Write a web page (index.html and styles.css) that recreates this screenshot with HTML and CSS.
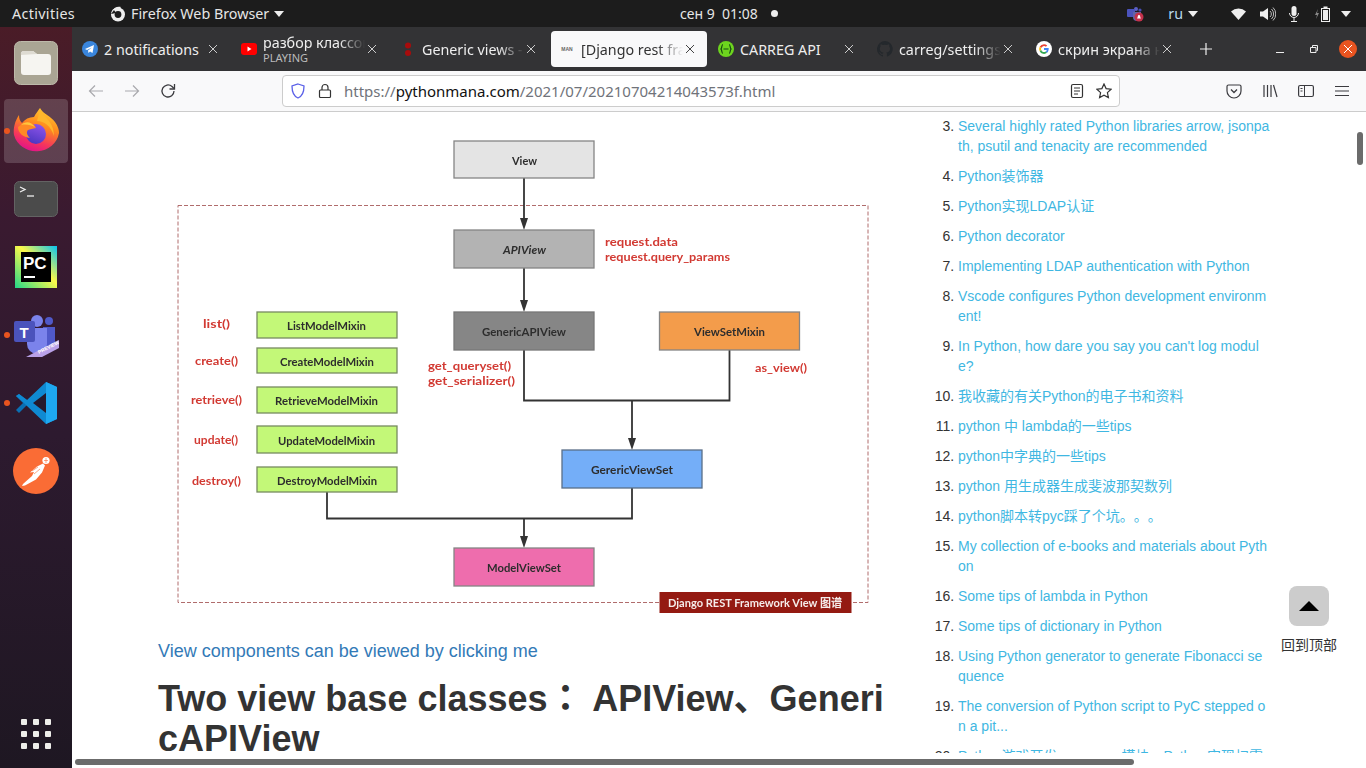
FILE: index.html
```html
<!doctype html>
<html lang="ru">
  <head>
    <meta charset="utf-8" />
    <title>[Django rest framework] Generic views</title>
    <link rel="stylesheet" href="styles.css">
  </head>
  <body>
    <svg class="sprite" aria-hidden="true">
      <symbol id="i-close" viewBox="0 0 10 10"><path d="M1 1l8 8M9 1l-8 8" fill="none" stroke="currentColor" stroke-width="1"/></symbol>
      <symbol id="i-caret" viewBox="0 0 10 6"><path d="M0 0h10L5 6z" fill="currentColor"/></symbol>
    </svg>

    <header class="topbar">
      <span class="activities">Activities</span>
      <span class="appmenu">
        <svg width="16" height="16" viewBox="0 0 16 16"><circle cx="8" cy="8.500" r="7" fill="#eee"/><circle cx="8" cy="8.500" r="3.400" fill="#1d1d1d"/><path d="M2 5C4 1 8 0 11 1L8 5z" fill="#eee"/><path d="M1 8l3-4 2 3z" fill="#1d1d1d"/></svg>
        <span>Firefox Web Browser</span>
        <svg class="caret" width="10" height="6"><use href="#i-caret"/></svg>
      </span>
      <span class="clock">сен 9&nbsp;&nbsp;01:08</span>
      <span class="clock-dot"></span>
      <span class="tray">
        <svg class="tray-teams" width="17" height="16" viewBox="0 0 17 16"><circle cx="9" cy="3" r="2" fill="#5b5fc7"/><circle cx="13" cy="4" r="1.600" fill="#464eb8"/><rect x="0" y="3" width="8" height="8" rx="1" fill="#4b53bc"/><path d="M6 6h8v5a4 4 0 0 1-8 0z" fill="#6264a7"/><circle cx="12" cy="11" r="4.500" fill="#c4314b"/><path d="M10 12.500c1-1 .5-3.500 2-3.500s1 2.500 2 3.500z" fill="#fff"/></svg>
        <span class="lang">ru</span>
        <svg class="caret" width="10" height="6"><use href="#i-caret"/></svg>
        <svg class="tray-wifi" width="15" height="12" viewBox="0 0 15 12"><path d="M0 3.500a11 11 0 0 1 15 0L7.500 12z" fill="#eee"/></svg>
        <svg class="tray-vol" width="16" height="14" viewBox="0 0 16 14"><path d="M0 4.500h3L8 1v12L3 9.500H0z" fill="#eee"/><path d="M10 4a4 4 0 0 1 0 6M11.500 2a7 7 0 0 1 0 10M13 .5a9 9 0 0 1 0 13" fill="none" stroke="#bbb"/></svg>
        <svg class="tray-mic" width="12" height="16" viewBox="0 0 12 16"><rect x="3.500" y="0" width="5" height="10" rx="2.500" fill="#eee"/><path d="M1.500 7a4.500 4.500 0 0 0 9 0M6 11.500V15M3 15.500h6" fill="none" stroke="#eee"/></svg>
        <svg class="tray-bat" width="16" height="16" viewBox="0 0 16 16"><path d="M3 3L0 9h2l-1 4 3-6H2z" fill="#888"/><rect x="6.500" y="2.500" width="8" height="13" fill="none" stroke="#eee"/><rect x="8.500" y="0.500" width="4" height="2" fill="#eee"/><rect x="8" y="4" width="5" height="10" fill="#eee"/></svg>
        <svg class="caret" width="10" height="6"><use href="#i-caret"/></svg>
      </span>
    </header>

    <div class="desktop">
      <nav class="dock">
        <div class="dock-item">
          <svg width="44" height="44" viewBox="0 0 44 44"><rect x=".5" y=".5" width="43" height="43" rx="6" fill="#aaa594" stroke="#bdb9aa"/><path d="M7 13a3 3 0 0 1 3-3h9l4 3h11a3 3 0 0 1 3 3v15a3 3 0 0 1-3 3H10a3 3 0 0 1-3-3z" fill="#f6f5f1"/><path d="M7 14a3 3 0 0 1 3-4h9l4 3z" fill="#dedbd2"/></svg>
        </div>
        <div class="dock-item is-active">
          <span class="run-dot"></span>
          <svg width="46" height="46" viewBox="0 0 46 46">
            <defs>
              <linearGradient id="fx-outer" x1=".75" y1="0" x2=".35" y2="1"><stop offset="0" stop-color="#ffd030"/><stop offset=".4" stop-color="#ff8a1e"/><stop offset=".75" stop-color="#f5365c"/><stop offset="1" stop-color="#e0128a"/></linearGradient>
              <linearGradient id="fx-inner" x1=".7" y1="0" x2=".3" y2="1"><stop offset="0" stop-color="#8f55ea"/><stop offset="1" stop-color="#4a35c0"/></linearGradient>
            </defs>
            <path d="M27 0c3 6 11 8 15 14 3 4 4 8 4 11a23 21.500 0 0 1-45 2C0 20 2 13 6 7c0 4 1 6 3 8 3-4 7-6 12-6 2-4 4-6 6-9z" fill="url(#fx-outer)"/>
            <path d="M27 2c5 8 14 12 14 26-3-10-10-15-17-15z" fill="#ffb62c"/>
            <circle cx="23" cy="26" r="10" fill="url(#fx-inner)"/>
            <path d="M5 19c4-4 9-5 13-4 3 1 4 3 5 5-3 1-6 1-8 2-2 2-1 5 2 8-7-1-12-5-12-11z" fill="#ff8a25"/>
            <path d="M8 17c4-4 10-4 14 2-4-2-9-3-14-2z" fill="#ffc63c"/>
          </svg>
        </div>
        <div class="dock-item">
          <svg width="44" height="36" viewBox="0 0 44 36"><rect x=".5" y=".5" width="43" height="35" rx="5" fill="#4b4b4b" stroke="#636363"/><path d="M6 6l5 2.500L6 11" fill="none" stroke="#eee" stroke-width="1.300"/><path d="M13 15h7" stroke="#eee" stroke-width="1.300"/></svg>
        </div>
        <div class="dock-item">
          <svg width="42" height="42" viewBox="0 0 42 42">
            <defs><linearGradient id="pc-a" x1="0" y1="1" x2="1" y2="0"><stop offset="0" stop-color="#21d789"/><stop offset=".55" stop-color="#fcf84a"/><stop offset="1" stop-color="#07c3f2"/></linearGradient></defs>
            <rect width="42" height="42" fill="url(#pc-a)"/>
            <rect x="6" y="6" width="30" height="30" fill="#000"/>
            <text class="pc-text" x="8" y="23">PC</text>
            <rect x="9" y="30" width="11" height="2" fill="#fff"/>
          </svg>
        </div>
        <div class="dock-item">
          <span class="run-dot"></span>
          <svg width="46" height="44" viewBox="0 0 46 44">
            <circle cx="24" cy="8" r="6" fill="#7b83eb"/><circle cx="36" cy="8" r="4" fill="#5059c9"/>
            <path d="M30 14h12v16a4 4 0 0 1-4 4h-8z" fill="#5059c9"/>
            <path d="M14 15h20v16a10 10 0 0 1-20 0z" fill="#7b83eb"/>
            <rect x="1" y="8" width="21" height="21" rx="2" fill="#4b53bc"/>
            <text class="teams-t" x="6.500" y="24.500">T</text>
            <path d="M13 44l33-17v8l-17 9z" fill="#b9a1e8"/>
            <text class="teams-p" transform="translate(26 41) rotate(-27)">PREVIEW</text>
          </svg>
        </div>
        <div class="dock-item">
          <span class="run-dot"></span>
          <svg width="42" height="42" viewBox="0 0 42 42">
            <path d="M1 14l3-2 8 6L9 22z" fill="#0a6fb3"/><path d="M1 28l8-8 3 3-8 8z" fill="#0a6fb3"/>
            <path d="M31 0L12 18l-8-6-3 2 8 7 3 3 19 18 11-5V5z" fill="#0f8ad2"/>
            <path d="M31 0l11 5v32l-11 5z" fill="#1ea8f0"/>
            <path d="M31 11v20L18 21z" fill="#261a2c"/>
          </svg>
        </div>
        <div class="dock-item">
          <svg width="46" height="46" viewBox="0 0 46 46">
            <circle cx="23" cy="23" r="23" fill="#fa6c35"/>
            <circle cx="33" cy="12.500" r="3.600" fill="#fff"/>
            <path d="M31 12.500h4M33 10v5" stroke="#fa6c35" stroke-width=".6"/>
            <path d="M30 15.500l-6 3-7 6 4-.5-2 4-9 8-1 2 3-.5 11-6 6-7 3-7z" fill="#fff"/>
            <path d="M19 23l6-4M21 26l6-5" stroke="#fa6c35" stroke-width=".6"/>
          </svg>
        </div>
        <div class="dock-grid">
          <i></i><i></i><i></i><i></i><i></i><i></i><i></i><i></i><i></i>
        </div>
      </nav>

      <div class="browser">
        <div class="tabbar">
          <div class="tab">
            <svg class="favicon" viewBox="0 0 16 16"><circle cx="8" cy="8" r="8" fill="#3a86dd"/><path d="M3 8l9-4-1.500 8L8 10.500 6.500 12 6 9.500l4-3-5 2.500z" fill="#fff"/></svg>
            <span class="tab-label">2 notifications</span>
            <svg class="tab-close" width="10" height="10"><use href="#i-close"/></svg>
          </div>
          <div class="tab">
            <svg class="favicon" viewBox="0 0 16 16"><rect y="2" width="16" height="12" rx="3" fill="#f00"/><path d="M6.500 5.500v5l4-2.500z" fill="#fff"/></svg>
            <span class="tab-label tab-label-two"><span class="tab-title">разбор классов и миксинов</span><small>PLAYING</small></span>
            <svg class="tab-close" width="10" height="10"><use href="#i-close"/></svg>
          </div>
          <div class="tab">
            <svg class="favicon" viewBox="0 0 16 16"><circle cx="8" cy="4.500" r="3" fill="#a80c0c"/><circle cx="8" cy="12" r="3" fill="#a80c0c"/></svg>
            <span class="tab-label is-faded">Generic views - Django REST</span>
            <svg class="tab-close" width="10" height="10"><use href="#i-close"/></svg>
          </div>
          <div class="tab is-current">
            <span class="favicon favicon-man">MAN</span>
            <span class="tab-label is-faded">[Django rest framework] Generic</span>
            <svg class="tab-close" width="10" height="10"><use href="#i-close"/></svg>
          </div>
          <div class="tab">
            <svg class="favicon" viewBox="0 0 16 16"><circle cx="8" cy="8" r="8" fill="#6dd51e"/><path d="M5 3.500C3.500 3.500 4 7.500 3 8c1 .5.500 4.500 2 4.500M11 3.500c1.500 0 1 4 2 4.500-1 .5-.5 4.500-2 4.500M5.500 8h5" fill="none" stroke="#174a12" stroke-width="1.200"/></svg>
            <span class="tab-label">CARREG API</span>
            <svg class="tab-close" width="10" height="10"><use href="#i-close"/></svg>
          </div>
          <div class="tab">
            <svg class="favicon" viewBox="0 0 16 16"><path d="M8 0a8 8 0 0 0-2.500 15.600c.4.100.5-.2.500-.4v-1.400c-2.200.5-2.700-1-2.700-1-.4-.9-.9-1.200-.9-1.200-.7-.5.100-.5.100-.5.800.1 1.200.8 1.200.8.700 1.200 1.900.9 2.300.7.100-.5.300-.9.500-1.100-1.800-.2-3.700-.9-3.700-4 0-.9.300-1.600.8-2.100-.1-.2-.4-1 .1-2.100 0 0 .7-.2 2.200.8a7.600 7.600 0 0 1 4 0c1.500-1 2.200-.8 2.200-.8.400 1.100.2 1.900.1 2.100.5.600.8 1.300.8 2.100 0 3.100-1.900 3.700-3.700 3.900.3.300.6.700.6 1.500v2.200c0 .2.100.5.600.4A8 8 0 0 0 8 0z" fill="#24282c"/></svg>
            <span class="tab-label is-faded">carreg/settings.py at master</span>
            <svg class="tab-close" width="10" height="10"><use href="#i-close"/></svg>
          </div>
          <div class="tab">
            <svg class="favicon" viewBox="0 0 16 16"><circle cx="8" cy="8" r="8" fill="#fff"/><path d="M8 3.200a4.800 4.800 0 0 1 3.200 1.200L9.900 5.700A3 3 0 0 0 5.200 7L3.700 5.800A4.800 4.800 0 0 1 8 3.200z" fill="#ea4335"/><path d="M3.700 5.800L5.200 7a3 3 0 0 0 0 2L3.700 10.200a4.800 4.800 0 0 1 0-4.400z" fill="#fbbc05"/><path d="M5.200 9a3 3 0 0 0 4.500 1.600l1.400 1.200a4.800 4.800 0 0 1-7.400-1.600z" fill="#34a853"/><path d="M12.700 7H8v1.900h2.700a2.400 2.400 0 0 1-1 1.700l1.400 1.200c1.100-1 1.700-2.600 1.600-4.800z" fill="#4285f4"/></svg>
            <span class="tab-label is-faded">скрин экрана на ubuntu</span>
            <svg class="tab-close" width="10" height="10"><use href="#i-close"/></svg>
          </div>
          <div class="newtab">
            <svg width="14" height="14" viewBox="0 0 14 14"><path d="M7 1v12M1 7h12" stroke="#eee" stroke-width="1.200"/></svg>
          </div>
          <div class="winbtns">
            <span class="winbtn"><svg width="10" height="10" viewBox="0 0 10 10"><path d="M1 8.500h8" stroke="#eee" stroke-width="1"/></svg></span>
            <span class="winbtn"><svg width="10" height="10" viewBox="0 0 10 10"><path d="M1.500 3.500h5.500v5H1.500zM3.500 3V1.500h5V6.500H7.500" fill="none" stroke="#eee"/></svg></span>
            <span class="winbtn"><span class="winclose"><svg width="10" height="10"><use href="#i-close"/></svg></span></span>
          </div>
        </div>

        <div class="toolbar">
          <span class="tbtn is-off"><svg width="16" height="16" viewBox="0 0 16 16"><path d="M15 8H1.500M7 2.500L1.500 8 7 13.500" fill="none" stroke="currentColor" stroke-width="1.200"/></svg></span>
          <span class="tbtn is-off"><svg width="16" height="16" viewBox="0 0 16 16"><path d="M1 8h13.500M9 2.500L14.500 8 9 13.500" fill="none" stroke="currentColor" stroke-width="1.200"/></svg></span>
          <span class="tbtn"><svg width="16" height="16" viewBox="0 0 16 16"><path d="M14 8a6 6 0 1 1-2-4.500L14 5.500" fill="none" stroke="currentColor" stroke-width="1.300"/><path d="M14.500 1v5h-5" fill="none" stroke="currentColor" stroke-width="1.300"/></svg></span>

          <div class="urlbar">
            <svg width="16" height="16" viewBox="0 0 16 16"><path d="M8 1l6 2c0 6-1 10-6 12C3 13 2 9 2 3z" fill="none" stroke="#5a60e8" stroke-width="1.300"/></svg>
            <svg width="16" height="16" viewBox="0 0 16 16"><rect x="2.500" y="7" width="11" height="7.500" rx="1" fill="none" stroke="#333" stroke-width="1.200"/><path d="M5 7V4.500a3 3 0 0 1 6 0V7" fill="none" stroke="#333" stroke-width="1.200"/></svg>
            <span class="url">https://<b>pythonmana.com</b>/2021/07/20210704214043573f.html</span>
            <svg class="url-reader" width="16" height="16" viewBox="0 0 16 16"><rect x="2.500" y="1.500" width="11" height="13" rx="1.500" fill="none" stroke="#333" stroke-width="1.200"/><path d="M5 5h6M5 8h6M5 11h4" stroke="#333"/></svg>
            <svg width="16" height="16" viewBox="0 0 16 16"><path d="M8 1l2.100 4.600 5 .6-3.700 3.400 1 4.900L8 12.100l-4.400 2.400 1-4.900L.9 6.200l5-.6z" fill="none" stroke="#333" stroke-width="1.200"/></svg>
          </div>

          <div class="tools">
            <span class="tbtn"><svg width="16" height="16" viewBox="0 0 16 16"><path d="M2.500 2h11A1.500 1.500 0 0 1 15 3.500V8a7 7 0 0 1-14 0V3.500A1.500 1.500 0 0 1 2.500 2z" fill="none" stroke="currentColor" stroke-width="1.200"/><path d="M5 6.500l3 3 3-3" fill="none" stroke="currentColor" stroke-width="1.300"/></svg></span>
            <span class="tbtn"><svg width="16" height="16" viewBox="0 0 16 16"><path d="M2 2v12M5.500 2v12M9 2v12M11.500 2l3.500 12" fill="none" stroke="currentColor" stroke-width="1.200"/></svg></span>
            <span class="tbtn"><svg width="16" height="16" viewBox="0 0 16 16"><rect x=".6" y="2.500" width="14.800" height="11" rx="1.500" fill="none" stroke="currentColor" stroke-width="1.200"/><path d="M6.500 2.500v11M2.500 5.500h2M2.500 8h2" fill="none" stroke="currentColor"/></svg></span>
            <span class="tbtn"><svg width="16" height="16" viewBox="0 0 16 16"><path d="M1 3.500h14M1 8h14M1 12.500h14" stroke="currentColor" stroke-width="1.200"/></svg></span>
          </div>
        </div>

        <div class="page">
          <main class="article">
            <svg class="diagram" width="725" height="520" viewBox="158 112 725 520">
              <rect class="frame" x="178" y="205.500" width="690" height="397"/>

              <g class="wires">
                <path d="M524 178V222M524 268V304M524 350V400.500H729.500V350M632 400.500V442M327 492V518.500H632V488M524 518.500V540"/>
              </g>
              <g class="heads">
                <path d="M520 218h8l-4 12z"/>
                <path d="M520 300h8l-4 12z"/>
                <path d="M628 438h8l-4 12z"/>
                <path d="M520 536h8l-4 12z"/>
              </g>

              <rect class="box c-view" x="454" y="141" width="140" height="37"/>
              <rect class="box c-api" x="454" y="230" width="140" height="38"/>
              <rect class="box c-generic" x="454" y="312" width="140" height="38"/>
              <rect class="box c-viewset" x="659.500" y="312" width="140" height="38"/>
              <rect class="box c-gvs" x="562" y="450" width="140" height="38"/>
              <rect class="box c-mvs" x="454" y="548" width="140" height="38"/>
              <rect class="box c-mixin" x="257" y="312" width="140" height="26"/>
              <rect class="box c-mixin" x="257" y="348" width="140" height="25"/>
              <rect class="box c-mixin" x="257" y="387" width="140" height="26"/>
              <rect class="box c-mixin" x="257" y="426" width="140" height="27"/>
              <rect class="box c-mixin" x="257" y="467" width="140" height="25"/>

              <text class="lbl" x="512" y="165" textLength="25" lengthAdjust="spacingAndGlyphs">View</text>
              <text class="lbl is-italic" x="503" y="254" textLength="43" lengthAdjust="spacingAndGlyphs">APIView</text>
              <text class="lbl" x="482" y="336" textLength="84" lengthAdjust="spacingAndGlyphs">GenericAPIView</text>
              <text class="lbl" x="694" y="336" textLength="71" lengthAdjust="spacingAndGlyphs">ViewSetMixin</text>
              <text class="lbl" x="591" y="474" textLength="82" lengthAdjust="spacingAndGlyphs">GerericViewSet</text>
              <text class="lbl" x="487" y="572" textLength="74" lengthAdjust="spacingAndGlyphs">ModelViewSet</text>
              <text class="lbl" x="287" y="330" textLength="79" lengthAdjust="spacingAndGlyphs">ListModelMixin</text>
              <text class="lbl" x="280" y="366" textLength="94" lengthAdjust="spacingAndGlyphs">CreateModelMixin</text>
              <text class="lbl" x="275" y="405" textLength="103" lengthAdjust="spacingAndGlyphs">RetrieveModelMixin</text>
              <text class="lbl" x="278" y="445" textLength="97" lengthAdjust="spacingAndGlyphs">UpdateModelMixin</text>
              <text class="lbl" x="277" y="485" textLength="100" lengthAdjust="spacingAndGlyphs">DestroyModelMixin</text>

              <text class="red" x="203" y="328" textLength="27" lengthAdjust="spacingAndGlyphs">list()</text>
              <text class="red" x="195" y="365" textLength="43" lengthAdjust="spacingAndGlyphs">create()</text>
              <text class="red" x="191" y="404" textLength="51" lengthAdjust="spacingAndGlyphs">retrieve()</text>
              <text class="red" x="194" y="444" textLength="44" lengthAdjust="spacingAndGlyphs">update()</text>
              <text class="red" x="192" y="485" textLength="49" lengthAdjust="spacingAndGlyphs">destroy()</text>
              <text class="red" x="605" y="246" textLength="73" lengthAdjust="spacingAndGlyphs">request.data</text>
              <text class="red" x="605" y="261" textLength="125" lengthAdjust="spacingAndGlyphs">request.query_params</text>
              <text class="red" x="428" y="370" textLength="83" lengthAdjust="spacingAndGlyphs">get_queryset()</text>
              <text class="red" x="428" y="385" textLength="87" lengthAdjust="spacingAndGlyphs">get_serializer()</text>
              <text class="red" x="755" y="372" textLength="52" lengthAdjust="spacingAndGlyphs">as_view()</text>

              <rect class="banner" x="659.500" y="592" width="192" height="21"/>
              <text class="banner-text" x="668" y="607" textLength="174" lengthAdjust="spacingAndGlyphs">Django REST Framework View 图谱</text>
            </svg>
            <p class="view-link"><a href="#">View components can be viewed by clicking me</a></p>
            <h2>Two view base classes： APIView、GenericAPIView</h2>
          </main>

          <aside class="sidebar">
            <ol start="3">
              <li><a href="#">Several highly rated Python libraries arrow, jsonpath, psutil and tenacity are recommended</a></li>
              <li><a href="#">Python装饰器</a></li>
              <li><a href="#">Python实现LDAP认证</a></li>
              <li><a href="#">Python decorator</a></li>
              <li><a href="#">Implementing LDAP authentication with Python</a></li>
              <li><a href="#">Vscode configures Python development environment!</a></li>
              <li><a href="#">In Python, how dare you say you can't log module?</a></li>
              <li><a href="#">我收藏的有关Python的电子书和资料</a></li>
              <li><a href="#">python 中 lambda的一些tips</a></li>
              <li><a href="#">python中字典的一些tips</a></li>
              <li><a href="#">python 用生成器生成斐波那契数列</a></li>
              <li><a href="#">python脚本转pyc踩了个坑。。。</a></li>
              <li><a href="#">My collection of e-books and materials about Python</a></li>
              <li><a href="#">Some tips of lambda in Python</a></li>
              <li><a href="#">Some tips of dictionary in Python</a></li>
              <li><a href="#">Using Python generator to generate Fibonacci sequence</a></li>
              <li><a href="#">The conversion of Python script to PyC stepped on a pit...</a></li>
              <li><a href="#">Python游戏开发，pygame模块，Python实现扫雷</a></li>
            </ol>
          </aside>

          <div class="totop">
            <span class="totop-btn"><i></i></span>
            <span class="totop-text">回到顶部</span>
          </div>
          <div class="vscroll"></div>
          <div class="hscroll"></div>
        </div>
      </div>
    </div>
  </body>
</html>
```

FILE: styles.css
```css
* {
  box-sizing: border-box;
}
html,
body {
  margin: 0;
  height: 768px;
  overflow: hidden;
}
body {
  display: flex;
  flex-direction: column;
  font-family: "Noto Sans", "Noto Sans CJK SC", sans-serif;
  font-size: 14.300px;
  background: #fff;
}
.sprite {
  display: none;
}

/* gnome top bar */
.topbar {
  display: flex;
  align-items: center;
  height: 27px;
  flex: none;
  background: #1c1c1c;
  color: #e6e6e6;
}
.activities {
  margin-left: 12px;
  width: 98px;
  letter-spacing: 0.35px;
}
.appmenu {
  display: flex;
  align-items: center;
  gap: 5px;
  width: 174px;
  white-space: nowrap;
}
.appmenu svg {
  flex: none;
}
.caret {
  color: #eee;
}
.clock {
  margin-left: 396px;
  font-size: 14px;
}
.clock-dot {
  width: 7px;
  height: 7px;
  margin-left: 13px;
  border-radius: 50%;
  background: #eee;
}
.tray {
  display: flex;
  align-items: center;
  margin-left: auto;
  padding-right: 15px;
}
.lang {
  margin-left: 24px;
  color: #b9d9ee;
}
.tray .lang + .caret {
  margin-left: 5px;
}
.tray-wifi {
  margin-left: 33px;
}
.tray-vol {
  margin-left: 14px;
}
.tray-mic {
  margin-left: 12px;
}
.tray-bat {
  margin-left: 15px;
}
.tray-bat + .caret {
  margin-left: 10px;
}

.desktop {
  display: flex;
  flex: 1;
  min-height: 0;
}

/* launcher */
.dock {
  display: flex;
  flex-direction: column;
  align-items: center;
  gap: 4px;
  flex: none;
  width: 72px;
  padding-top: 4px;
  background: linear-gradient(180deg, #4a1c27 0%, #3a1a30 25%, #2d1a2f 55%, #1e1722 100%);
}
.dock-item {
  position: relative;
  display: flex;
  align-items: center;
  justify-content: center;
  width: 64px;
  height: 64px;
  border-radius: 4px;
}
.dock-item.is-active {
  background: rgba(255, 255, 255, 0.17);
}
.run-dot {
  position: absolute;
  left: 0;
  top: 29px;
  width: 6px;
  height: 6px;
  border-radius: 50%;
  background: #e9541f;
}
.pc-text {
  font: 700 17px "Liberation Sans", sans-serif;
  fill: #fff;
}
.teams-t {
  font: 700 15px "Liberation Sans", sans-serif;
  fill: #fff;
}
.teams-p {
  font: 700 5px "Liberation Sans", sans-serif;
  fill: #fff;
}
.dock-grid {
  display: grid;
  grid-template-columns: repeat(3, 6px);
  gap: 6px;
  margin-top: auto;
  margin-bottom: 19px;
}
.dock-grid i {
  height: 6px;
  border-radius: 1px;
  background: #eeeeea;
}

/* firefox */
.browser {
  display: flex;
  flex-direction: column;
  flex: 1;
  min-width: 0;
}
.tabbar {
  display: flex;
  align-items: center;
  flex: none;
  height: 44px;
  padding-left: 2px;
  background: #333335;
  color: #eeeeee;
}
.tab {
  display: flex;
  align-items: center;
  flex: none;
  width: 156px;
  height: 36px;
  margin-right: 3px;
  padding-left: 8px;
  border-radius: 4px;
}
.tab.is-current {
  background: #f9f9fa;
  color: #333;
}
.favicon {
  flex: none;
  width: 16px;
  height: 16px;
}
.favicon-man {
  font: 700 5px/16px "Liberation Sans", sans-serif;
  text-align: center;
  color: #666;
}
.tab-label {
  flex: none;
  width: 102px;
  margin-left: 6px;
  overflow: hidden;
  white-space: nowrap;
}
.tab-label.is-faded,
.tab-title {
  mask-image: linear-gradient(90deg, #000 75%, transparent 100%);
}
.tab-label-two {
  display: flex;
  flex-direction: column;
  line-height: 16px;
}
.tab-title {
  display: block;
  overflow: hidden;
}
.tab-label-two small {
  font-size: 11px;
  line-height: 13px;
  color: #bbb;
}
.tab-close {
  flex: none;
  margin-left: 2px;
  color: #ccc;
}
.is-current .tab-close {
  color: #444;
}
.newtab {
  display: flex;
  align-items: center;
  justify-content: center;
  width: 36px;
  margin-left: 1px;
}
.winbtns {
  display: flex;
  margin-left: auto;
  padding-right: 1px;
}
.winbtn {
  display: flex;
  align-items: center;
  justify-content: center;
  width: 34px;
}
.winclose {
  display: flex;
  align-items: center;
  justify-content: center;
  width: 18px;
  height: 18px;
  border-radius: 50%;
  background: #e95420;
  color: #fff;
}

.toolbar {
  display: flex;
  align-items: center;
  flex: none;
  height: 41px;
  padding-left: 6px;
  background: #f9f9fa;
  border-bottom: 1px solid #ccc;
}
.tbtn {
  display: flex;
  align-items: center;
  justify-content: center;
  flex: none;
  width: 36px;
  color: #3b3b3f;
}
.tbtn.is-off {
  color: #a9a9ad;
}
.urlbar {
  display: flex;
  align-items: center;
  flex: none;
  gap: 11px;
  width: 838px;
  height: 32px;
  margin-left: 96px;
  padding: 0 7px 0 7px;
  background: #fff;
  border: 1px solid #ccc;
  border-radius: 4px;
}
.url {
  font-size: 15px;
  color: #70737a;
  white-space: nowrap;
}
.url b {
  font-weight: 400;
  color: #111;
}
.url-reader {
  margin-left: auto;
}
.tools {
  display: flex;
  margin-left: 96px;
}

/* page */
.page {
  position: relative;
  display: flex;
  flex: 1;
  min-height: 0;
  overflow: hidden;
  background: #fff;
  font-family: "Liberation Sans", "Noto Sans CJK SC", sans-serif;
  font-size: 14px;
  color: #333;
  text-spacing-trim: space-all;
}
.article {
  flex: none;
  width: 834px;
  padding-left: 86px;
  padding-right: 11px;
}
.diagram {
  display: block;
  filter: blur(0.3px);
}
.frame {
  fill: none;
  stroke: #b06c6c;
  stroke-dasharray: 4 2;
}
.wires path {
  fill: none;
  stroke: #333;
  stroke-width: 1.800;
}
.heads path {
  fill: #333;
}
.box {
  stroke: #858585;
  stroke-width: 1.300;
}
.c-view { fill: #e4e4e4; }
.c-api { fill: #b3b3b3; }
.c-generic { fill: #868686; stroke: #777; }
.c-viewset { fill: #f39c4b; }
.c-gvs { fill: #74aef8; stroke: #5a6f88; }
.c-mvs { fill: #ee6dad; }
.c-mixin { fill: #c3f878; stroke: #778a60; }
.lbl,
.red,
.banner-text {
  font-family: "Lato", "Noto Sans CJK SC", sans-serif;
  font-size: 11.500px;
  font-weight: 700;
}
.lbl {
  fill: #2d2d2d;
}
.lbl.is-italic {
  font-style: italic;
}
.red {
  fill: #d23a33;
}
.banner {
  fill: #941a12;
}
.banner-text {
  fill: #f5ecea;
}
.view-link {
  margin: 6px 0 0;
  font-size: 18px;
  line-height: 26px;
}
.view-link a {
  color: #337ab7;
  text-decoration: none;
}
h2 {
  margin: 15px 0 0;
  font-family: "Liberation Sans", "Noto Sans CJK JP", sans-serif;
  font-size: 36px;
  line-height: 40px;
  font-weight: 700;
  word-break: break-all;
}
.sidebar {
  flex: none;
  width: 364px;
  height: 641px;
  overflow: hidden;
}
.sidebar ol {
  width: 364px;
  margin: 4px 0 0;
  padding: 0 0 0 52px;
  line-height: 20px;
}
.sidebar li {
  width: 312px;
  margin-bottom: 10px;
  word-break: break-all;
}
.sidebar a {
  color: #3fb7e2;
  text-decoration: none;
}
.totop {
  position: absolute;
  left: 1209px;
  top: 474px;
  display: flex;
  flex-direction: column;
  align-items: center;
  width: 56px;
}
.totop-btn {
  display: flex;
  align-items: center;
  justify-content: center;
  width: 40px;
  height: 40px;
  border-radius: 8px;
  background: #ccc;
}
.totop-btn i {
  width: 0;
  height: 0;
  border-left: 10px solid transparent;
  border-right: 10px solid transparent;
  border-bottom: 10px solid #000;
}
.totop-text {
  margin-top: 9px;
  line-height: 20px;
  white-space: nowrap;
}
.vscroll {
  position: absolute;
  left: 1285px;
  top: 20px;
  width: 6px;
  height: 33px;
  border-radius: 3px;
  background: #6b6b6b;
}
.hscroll {
  position: absolute;
  left: 3px;
  top: 647px;
  width: 1059px;
  height: 6px;
  border-radius: 3px;
  background: #6b6b6b;
}
```
